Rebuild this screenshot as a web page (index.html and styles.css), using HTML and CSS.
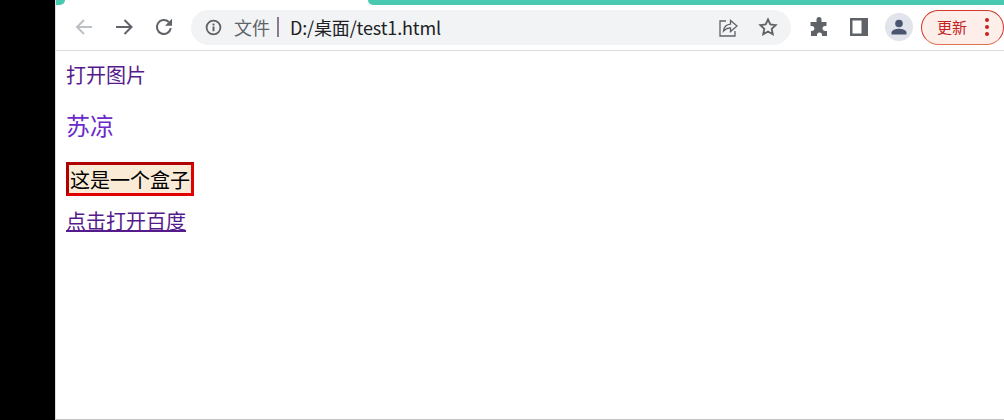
FILE: index.html
```html
<!DOCTYPE html>
<html lang="zh">
<head>
<meta charset="utf-8">
<title>test1</title>
<link rel="stylesheet" href="styles.css">
</head>
<body>
<div class="screen">
  <aside class="side"></aside>
  <main class="browser">
    <div class="tabstrip">
      <div class="corner"></div>
      <div class="teal"></div>
    </div>
    <div class="toolbar">
      <div class="navs">
        <svg class="ic back" viewBox="0 0 20 20"><path d="M18 10H3M10 3l-7 7 7 7"/></svg>
        <svg class="ic fwd" viewBox="0 0 20 20"><path d="M2 10h15M10.500 3l7 7-7 7"/></svg>
        <svg class="ic reload" viewBox="0 0 20 20"><path d="M16.800 11.200A7 7 0 1 1 14.800 5"/><path class="fill" d="M18 1.800v7h-7z"/></svg>
      </div>
      <div class="omnibox">
        <svg class="info" viewBox="0 0 16 16"><circle cx="8" cy="8" r="6.500"/><rect x="7.100" y="7" width="1.800" height="4.500"/><rect x="7.100" y="4.300" width="1.800" height="1.800"/></svg>
        <span class="scheme">文件</span>
        <span class="sep"></span>
        <span class="url">D:/桌面/test1.html</span>
        <span class="grow"></span>
        <svg class="share" viewBox="0 0 20 20"><path d="M8 4H2v15h15v-5"/><path d="M5.500 14c.5-4 3-6.500 7-6.800V3.500l6.500 5.500-6.500 5.500v-3.700c-3 0-5 1-7 3.200z"/></svg>
        <svg class="star" viewBox="0 0 20 20"><path d="M10 2.500l2.300 5 5.400.6-4 3.700 1.100 5.400-4.800-2.700-4.800 2.700 1.100-5.400-4-3.700 5.400-.6z"/></svg>
      </div>
      <div class="tools">
        <svg class="puzzle" viewBox="0 0 20 20"><path d="M7.500 2.500a2.500 2.500 0 0 1 5 0V5h5v4h-1.500a2.500 2.500 0 0 0 0 5H18v5h-5v-1a2.500 2.500 0 0 0-5 0v1H2v-5h1a2.500 2.500 0 0 0 0-5H1.500V5h6z"/></svg>
        <svg class="panel" viewBox="0 0 18 18"><path d="M0 0h18v18H0z M2.500 2.500v13h9v-13z" fill-rule="evenodd"/></svg>
        <div class="avatar"><svg viewBox="0 0 28 28"><circle cx="14" cy="10.500" r="3.800"/><path d="M6.500 21.500v-2c0-2.500 4.500-3.800 7.500-3.800s7.500 1.300 7.500 3.800v2z"/></svg></div>
        <div class="update"><span class="update-label">更新</span><span class="dots"><i></i><i></i><i></i></span></div>
      </div>
    </div>
    <div class="page">
      <p class="open-img">打开图片</p>
      <p class="name">苏凉</p>
      <div class="box">这是一个盒子</div>
      <a class="link" href="#">点击打开百度</a>
    </div>
  </main>
</div>
</body>
</html>
```

FILE: styles.css
```css
* { box-sizing: border-box; }
html, body { margin: 0; height: 100%; }
body { font-family: "Noto Sans CJK SC", "Liberation Sans", sans-serif; background: #fff; overflow: hidden; }
.screen { display: flex; width: 1004px; height: 420px; }
.side { width: 55px; flex: none; background: #000; }
.browser { flex: 1; display: flex; flex-direction: column; border-bottom: 1px solid #c4c4c4; border-left: 1px solid #dcdcdc; min-width: 0; }

.tabstrip { height: 5px; display: flex; justify-content: space-between; flex: none; }
.corner { width: 9px; height: 5px; background: #48c9b0; border-bottom-right-radius: 5px; }
.teal { width: 636px; height: 5px; background: #48c9b0; border-bottom-left-radius: 5px; }

.toolbar { height: 46px; flex: none; display: flex; align-items: center; border-bottom: 1px solid #dcdcdc; padding-bottom: 1px; }
.navs { display: flex; align-items: center; gap: 20px; padding-left: 18px; width: 135px; flex: none; }
.ic { width: 20px; height: 20px; fill: none; stroke: #5f6368; stroke-width: 2; flex: none; }
.ic.back { stroke: #bdc1c6; }
.ic .fill { fill: #5f6368; stroke: none; }

.omnibox { width: 600px; height: 35px; border-radius: 18px; background: #f1f3f4; display: flex; align-items: center; padding-left: 14px; padding-right: 13px; flex: none; }
.info { width: 17px; height: 17px; flex: none; fill: #5f6368; }
.info circle { fill: none; stroke: #5f6368; stroke-width: 1.700; }
.scheme { font-size: 18px; color: #5f6368; margin-left: 12px; line-height: 24px; }
.sep { width: 2px; height: 20px; background: #8c7a90; margin-left: 7px; margin-right: 11px; }
.url { font-size: 18px; letter-spacing: -0.15px; color: #202124; line-height: 24px; }
.grow { flex: 1; }
.share { width: 20px; height: 20px; fill: none; stroke: #5f6368; stroke-width: 1.300; flex: none; margin-right: 20px; }
.star { width: 20px; height: 20px; fill: none; stroke: #5f6368; stroke-width: 1.800; flex: none; }

.tools { display: flex; align-items: center; flex: 1; padding-left: 18px; }
.puzzle { width: 20px; height: 20px; fill: #5f6368; flex: none; }
.panel { width: 18px; height: 18px; fill: #5f6368; flex: none; margin-left: 21px; }
.avatar { width: 28px; height: 28px; border-radius: 50%; background: #e1e4ea; margin-left: 17px; flex: none; }
.avatar svg { display: block; width: 28px; height: 28px; fill: #4a5670; }
.update { width: 83px; height: 35px; margin-left: 8px; flex: none; border: 1px solid #d0392b; border-bottom-color: #e07050; border-radius: 18px; background: #fdeeea; display: flex; align-items: center; padding-left: 15px; }
.update-label { font-size: 15px; color: #c5221f; line-height: 20px; }
.dots { display: flex; flex-direction: column; gap: 3px; margin-left: 18px; }
.dots i { display: block; width: 4px; height: 4px; border-radius: 50%; background: #c5221f; }

.page { flex: 1; padding: 11px 0 0 10px; font-size: 20px; line-height: 26px; }
.page p { margin: 0; }
.open-img { color: #551a8b; }
.name { color: #6a2bc8; font-size: 24px; line-height: 30px; margin-top: 22px !important; }
.box { width: 128px; height: 34px; margin-top: 22px; border: 3px solid #e00000; border-top-color: #b00000; border-left-color: #b00000; background: #faebd7; color: #000; padding: 0 1px; line-height: 30px; white-space: nowrap; }
.link { display: inline-block; margin-top: 12px; color: #551a8b; text-decoration: underline; }
```
